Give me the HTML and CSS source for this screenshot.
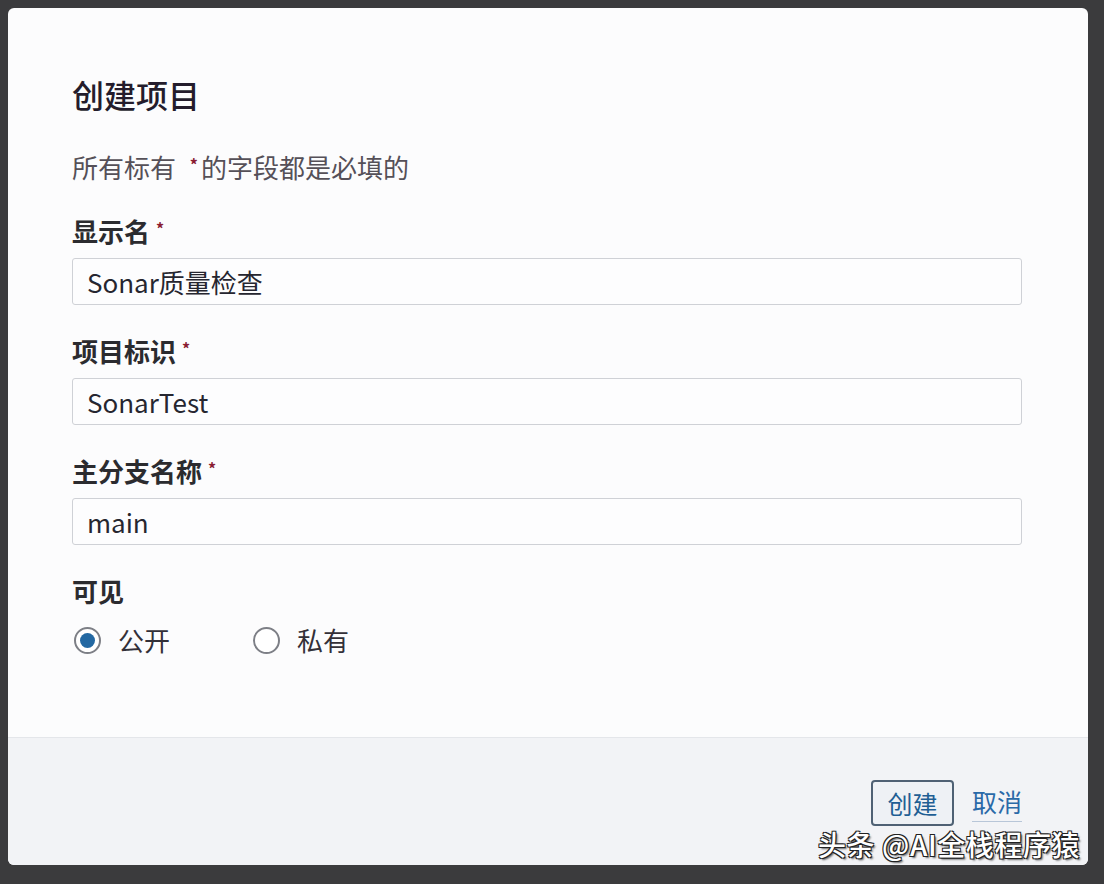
FILE: index.html
```html
<!DOCTYPE html>
<html lang="zh">
<head>
<meta charset="utf-8">
<title>创建项目</title>
<link rel="stylesheet" href="styles.css">
</head>
<body>
<div class="modal">
  <div class="modal-body">
    <h1 class="title">创建项目</h1>
    <p class="hint">所有标有 <span class="req">*</span>的字段都是必填的</p>

    <div class="field">
      <label class="label">显示名 <span class="req">*</span></label>
      <div class="input">Sonar质量检查</div>
    </div>
    <div class="field">
      <label class="label">项目标识 <span class="req">*</span></label>
      <div class="input">SonarTest</div>
    </div>
    <div class="field">
      <label class="label">主分支名称 <span class="req">*</span></label>
      <div class="input">main</div>
    </div>
    <div class="field">
      <label class="label">可见</label>
      <div class="radios">
        <div class="radio-item"><span class="radio checked"></span><span class="radio-text">公开</span></div>
        <div class="radio-item"><span class="radio"></span><span class="radio-text">私有</span></div>
      </div>
    </div>
  </div>
  <div class="modal-foot">
    <button class="btn">创建</button>
    <a class="link">取消</a>
  </div>
</div>
<div class="watermark">头条 @AI全栈程序猿</div>
</body>
</html>
```

FILE: styles.css
```css
html, body {
  margin: 0;
  padding: 0;
}
body {
  background: #3b3b3d;
  font-family: "Noto Sans CJK SC", "Noto Sans", "Liberation Sans", sans-serif;
  width: 1104px;
  height: 884px;
  overflow: hidden;
  position: relative;
}
.modal {
  margin: 8px 0 0 8px;
  width: 1080px;
  height: 857px;
  background: #fcfcfd;
  border-radius: 6px;
  display: flex;
  flex-direction: column;
  overflow: hidden;
}
.modal-body {
  flex: 1;
  padding: 66px 66px 0 64px;
  display: flex;
  flex-direction: column;
}
.title {
  margin: 0;
  font-size: 32px;
  line-height: 40px;
  font-weight: 500;
  color: #241c2c;
}
.hint {
  margin: 37px 0 0;
  font-size: 26px;
  line-height: 32px;
  color: #555058;
}
.req {
  color: #8a1d33;
  font-size: 16px;
  line-height: 0;
  vertical-align: 7px;
  font-weight: 700;
}
.hint .req {
  margin-left: 8px;
  margin-right: 3px;
}
.field {
  margin-top: 32px;
  display: flex;
  flex-direction: column;
}
.field + .field {
  margin-top: 30px;
}
.label {
  font-size: 26px;
  line-height: 32px;
  height: 32px;
  font-weight: 700;
  color: #2b2b2f;
}
.input {
  margin-top: 11px;
  height: 45px;
  border: 1px solid #cfd1d6;
  border-radius: 3px;
  background: #fdfdfe;
  padding: 0 14px;
  font-size: 26px;
  line-height: 45px;
  color: #262630;
}
.radios {
  margin-top: 17px;
  display: flex;
  align-items: center;
  height: 32px;
  gap: 81px;
}
.radio-item {
  display: flex;
  align-items: center;
  gap: 17px;
  padding-left: 2px;
}
.radio {
  width: 23px;
  height: 23px;
  border: 2px solid #7d7f86;
  border-radius: 50%;
  background: #fff;
  display: flex;
  align-items: center;
  justify-content: center;
}
.radio.checked::after {
  content: "";
  width: 15px;
  height: 15px;
  border-radius: 50%;
  background: #2368a2;
}
.radio-text {
  font-size: 26px;
  line-height: 32px;
  color: #333038;
}
.modal-foot {
  height: 128px;
  background: #f2f3f6;
  border-top: 1px solid #e4e6ea;
  display: flex;
  justify-content: flex-end;
  align-items: flex-start;
  padding: 42px 66px 0 0;
  box-sizing: border-box;
  gap: 18px;
}
.btn {
  width: 83px;
  height: 46px;
  border: 2px solid #4f6174;
  border-radius: 4px;
  background: #eef1f5;
  color: #1f5f94;
  font-family: inherit;
  font-size: 25px;
  line-height: 40px;
  padding: 0;
}
.link {
  font-size: 25px;
  color: #2a6aa8;
  text-decoration: none;
  border-bottom: 1px solid #b8c6d8;
  height: 40px;
  line-height: 40px;
  margin-top: 1px;
}
.watermark {
  position: absolute;
  left: 818px;
  top: 826px;
  font-size: 28px;
  letter-spacing: 0.6px;
  line-height: 36px;
  font-weight: 500;
  color: #ffffff;
  text-shadow: 1px 1px 0 #222, -1px -1px 0 #222, 1px -1px 0 #222, -1px 1px 0 #222, 2px 2px 2px rgba(0,0,0,0.6);
  white-space: nowrap;
}
```
